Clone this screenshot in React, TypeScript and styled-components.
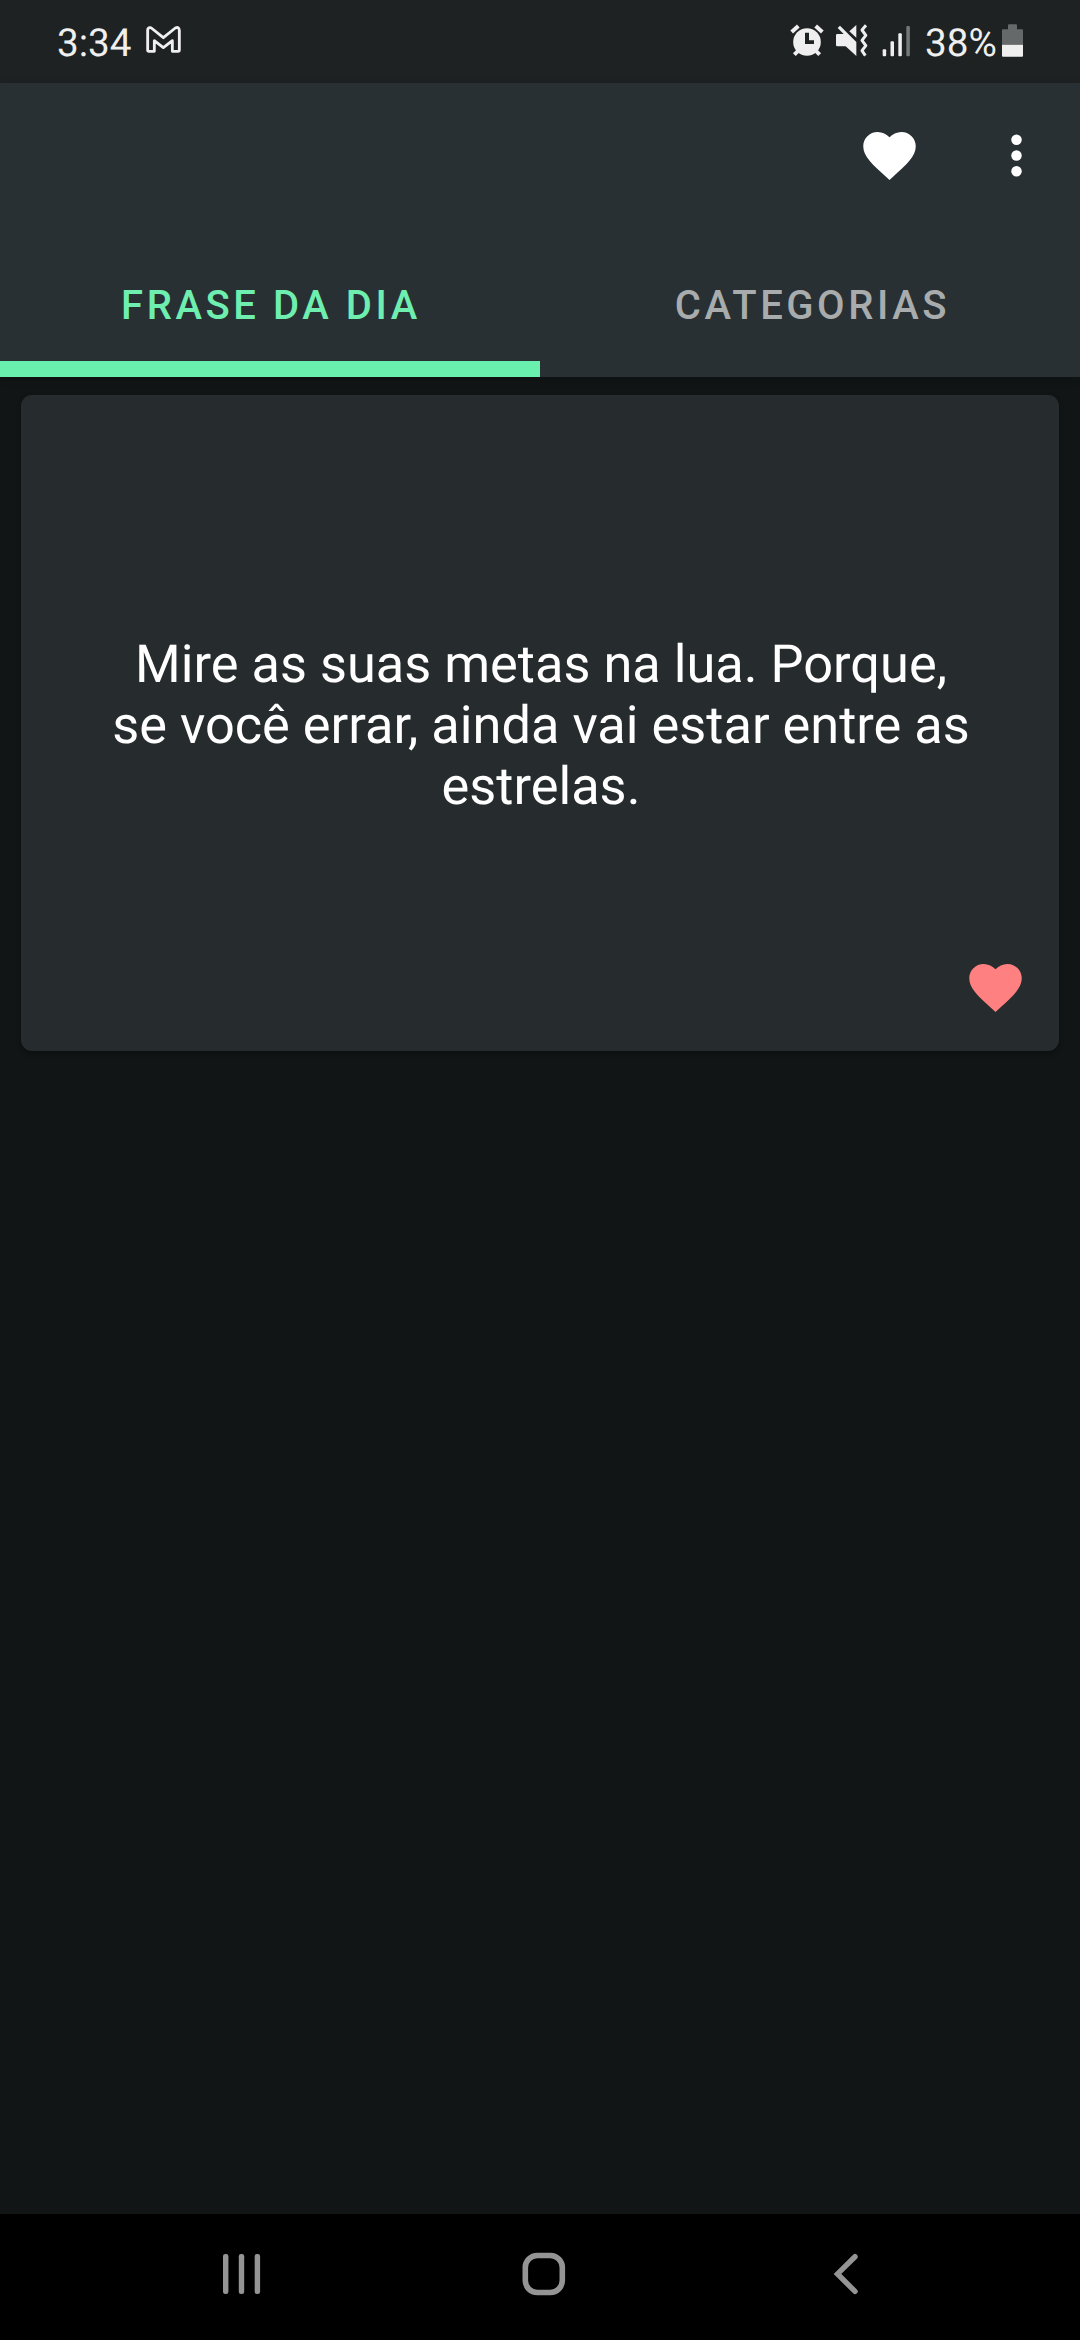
import React from "react";
import styled, { createGlobalStyle } from "styled-components";

const GlobalStyle = createGlobalStyle`
  *, *::before, *::after { box-sizing: border-box; }
  body {
    margin: 0;
    background: #111515;
    font-family: Roboto, "Noto Sans", sans-serif;
    text-rendering: geometricPrecision;
  }
`;

const Screen = styled.div`
  display: flex;
  flex-direction: column;
  width: 1080px;
  height: 2340px;
  overflow: hidden;
  background: #111515;
`;

const StatusBar = styled.div`
  display: flex;
  justify-content: space-between;
  align-items: flex-start;
  height: 83px;
  flex: none;
  padding: 20px 56px 0 57px;
  background: #1e2223;
  color: #efefef;
`;

const StatusGroup = styled.div`
  display: flex;
  align-items: flex-start;
`;

const StatusText = styled.span`
  font-size: 38.7px;
  line-height: 48px;
  white-space: nowrap;
`;

const StatusIcon = styled.svg<{ $before?: number }>`
  display: block;
  flex: none;
  height: 40px;
  margin-left: ${(p) => p.$before ?? 0}px;
`;

const BatteryLabel = styled(StatusText)`
  width: 76px;
  margin-left: 14.4px;
`;

const Header = styled.header`
  flex: none;
  height: 294px;
  background: #283033;
  box-shadow: 0 2px 8px rgba(0, 0, 0, 0.22);
`;

const Toolbar = styled.div`
  display: flex;
  justify-content: flex-end;
  align-items: center;
  gap: 64px;
  height: 145px;
  padding-right: 32px;
`;

const IconButton = styled.button<{ $color?: string }>`
  display: flex;
  width: 63px;
  height: 63px;
  padding: 0;
  border: 0;
  background: none;
  color: ${(p) => p.$color ?? "#ffffff"};

  svg {
    width: 100%;
    height: 100%;
  }
`;

const Tabs = styled.nav`
  display: grid;
  grid-template-columns: 1fr 1fr;
  height: 149px;
`;

const Tab = styled.button<{ $active?: boolean }>`
  display: flex;
  justify-content: center;
  align-items: center;
  padding: 23px 0 0 ${(p) => (p.$active ? 2 : 5)}px;
  border: 0;
  border-bottom: 16px solid ${(p) => (p.$active ? "#69f0ae" : "transparent")};
  background: none;
  color: ${(p) => (p.$active ? "#6eefb0" : "#a9acad")};
  font: 500 40px/40px Roboto, "Noto Sans", sans-serif;
  letter-spacing: 3.57px;
`;

const Content = styled.main`
  flex: 1;
  padding: 18px 21px;
`;

const QuoteCard = styled.article`
  display: flex;
  flex-direction: column;
  align-items: center;
  height: 656px;
  padding: 238.6px 32px 32px;
  border-radius: 11px;
  background: #262b2d;
  box-shadow: 0 2px 5px rgba(0, 0, 0, 0.3);
`;

const Quote = styled.p`
  width: 868px;
  margin: 0;
  padding-left: 2px;
  color: #ffffff;
  font-size: 52.33px;
  line-height: 61px;
  text-align: center;
`;

const CardActions = styled.div`
  display: flex;
  justify-content: flex-end;
  align-self: stretch;
  margin-top: auto;
`;

const NavBar = styled.footer`
  display: grid;
  grid-template-columns: 299.7px 311.8px auto;
  align-items: center;
  flex: none;
  height: 126px;
  padding: 0 0 6px 221px;
  background: #000000;
  color: #949494;

  svg {
    display: block;
    height: 46px;
  }
`;

const HeartIcon = () => (
  <svg viewBox="0 0 24 24" fill="currentColor">
    <path d="M12 21.35l-1.45-1.32C5.4 15.36 2 12.28 2 8.5 2 5.42 4.42 3 7.5 3c1.74 0 3.41.81 4.5 2.09C13.09 3.81 14.76 3 16.5 3 19.58 3 22 5.42 22 8.5c0 3.78-3.4 6.86-8.55 11.54L12 21.35z" />
  </svg>
);

const MoreIcon = () => (
  <svg viewBox="0 0 24 24" fill="currentColor">
    <circle cx="12" cy="6" r="2" />
    <circle cx="12" cy="12" r="2" />
    <circle cx="12" cy="18" r="2" />
  </svg>
);

const MailIcon = () => (
  <StatusIcon $before={12.3} width="38" viewBox="312 30 114 120" fill="none">
    <path
      d="M323 61 Q323 52 331 53 L334 54 L370 83 L406 54 Q417 49 418 61 V120 Q418 124 414 124 H397 V92 L370 113 L343 92 V124 H327 Q323 124 323 120 Z"
      stroke="#efefef"
      strokeWidth="8.5"
      strokeLinejoin="round"
    />
  </StatusIcon>
);

const AlarmIcon = () => (
  <StatusIcon width="36" viewBox="27 30 108 120">
    <g stroke="#efefef" strokeWidth="12">
      <path d="M35 66 L55 48" />
      <path d="M127 66 L107 48" />
      <path d="M58 119 L43 134" />
      <path d="M104 119 L119 134" />
    </g>
    <circle cx="81" cy="96" r="41.5" fill="#efefef" />
    <path d="M75 68 H87 V91 H102 V102 H75 Z" fill="#1e2223" />
  </StatusIcon>
);

const MuteIcon = () => (
  <StatusIcon $before={9} width="34" viewBox="162 30 102 120">
    <path
      d="M173 54 L180 47 L229 96 V138 L197 109 H172 Q168 109 168 105 V76 Q168 72 172 72 H191 Z"
      fill="#efefef"
    />
    <path d="M229 45 L208 64 L229 83 Z" fill="#efefef" />
    <path
      d="M258 46 L246 60 L257.5 76 L246 91 L257.5 107 L246 122 L256 137"
      fill="none"
      stroke="#efefef"
      strokeWidth="9"
      strokeLinejoin="round"
    />
  </StatusIcon>
);

const SignalIcon = () => (
  <StatusIcon $before={13} width="30" viewBox="304 30 90 120" fill="#efefef">
    <rect x="309" y="118" width="10.5" height="21" rx="3" />
    <rect x="332.5" y="94" width="10.5" height="45" rx="3" />
    <rect x="356" y="70" width="10.5" height="69" rx="3" />
    <rect x="380" y="48" width="10.5" height="91" rx="3" fill="#757879" />
  </StatusIcon>
);

const BatteryIcon = () => (
  <StatusIcon width="23" viewBox="663 30 69 120">
    <path d="M684 58 V46 Q684 43 687 43 H708 Q711 43 711 46 V58 H726 Q729 58 729 61 V104 H666 V61 Q666 58 669 58 Z" fill="#666969" />
    <path d="M666 104 H729 V137 Q729 140 726 140 H669 Q666 140 666 137 Z" fill="#efefef" />
  </StatusIcon>
);

const RecentsIcon = () => (
  <svg width="42" viewBox="0 0 42 46" fill="currentColor">
    <rect x="2" y="3" width="5.4" height="40" rx="2.2" />
    <rect x="17.8" y="3" width="5.4" height="40" rx="2.2" />
    <rect x="33.7" y="3" width="5.4" height="40" rx="2.2" />
  </svg>
);

const HomeIcon = () => (
  <svg width="46" viewBox="0 0 46 46" fill="none" stroke="currentColor" strokeWidth="5.6">
    <rect x="4.3" y="4.5" width="37" height="37" rx="12" />
  </svg>
);

const BackIcon = () => (
  <svg width="27" viewBox="0 0 27 46" fill="none" stroke="currentColor" strokeWidth="5.4" strokeLinecap="round">
    <path d="M23 5.7 L5.5 22.9 L23 40.4" />
  </svg>
);

export default function App() {
  return (
    <>
      <GlobalStyle />
      <Screen>
        <StatusBar>
          <StatusGroup>
            <StatusText>3:34</StatusText>
            <MailIcon />
          </StatusGroup>
          <StatusGroup>
            <AlarmIcon />
            <MuteIcon />
            <SignalIcon />
            <BatteryLabel>38%</BatteryLabel>
            <BatteryIcon />
          </StatusGroup>
        </StatusBar>
        <Header>
          <Toolbar>
            <IconButton aria-label="Favoritos">
              <HeartIcon />
            </IconButton>
            <IconButton aria-label="Mais opções">
              <MoreIcon />
            </IconButton>
          </Toolbar>
          <Tabs>
            <Tab $active>FRASE DA DIA</Tab>
            <Tab>CATEGORIAS</Tab>
          </Tabs>
        </Header>
        <Content>
          <QuoteCard>
            <Quote>Mire as suas metas na lua. Porque, se você errar, ainda vai estar entre as estrelas.</Quote>
            <CardActions>
              <IconButton $color="#ff8080" aria-label="Favoritar">
                <HeartIcon />
              </IconButton>
            </CardActions>
          </QuoteCard>
        </Content>
        <NavBar>
          <RecentsIcon />
          <HomeIcon />
          <BackIcon />
        </NavBar>
      </Screen>
    </>
  );
}
